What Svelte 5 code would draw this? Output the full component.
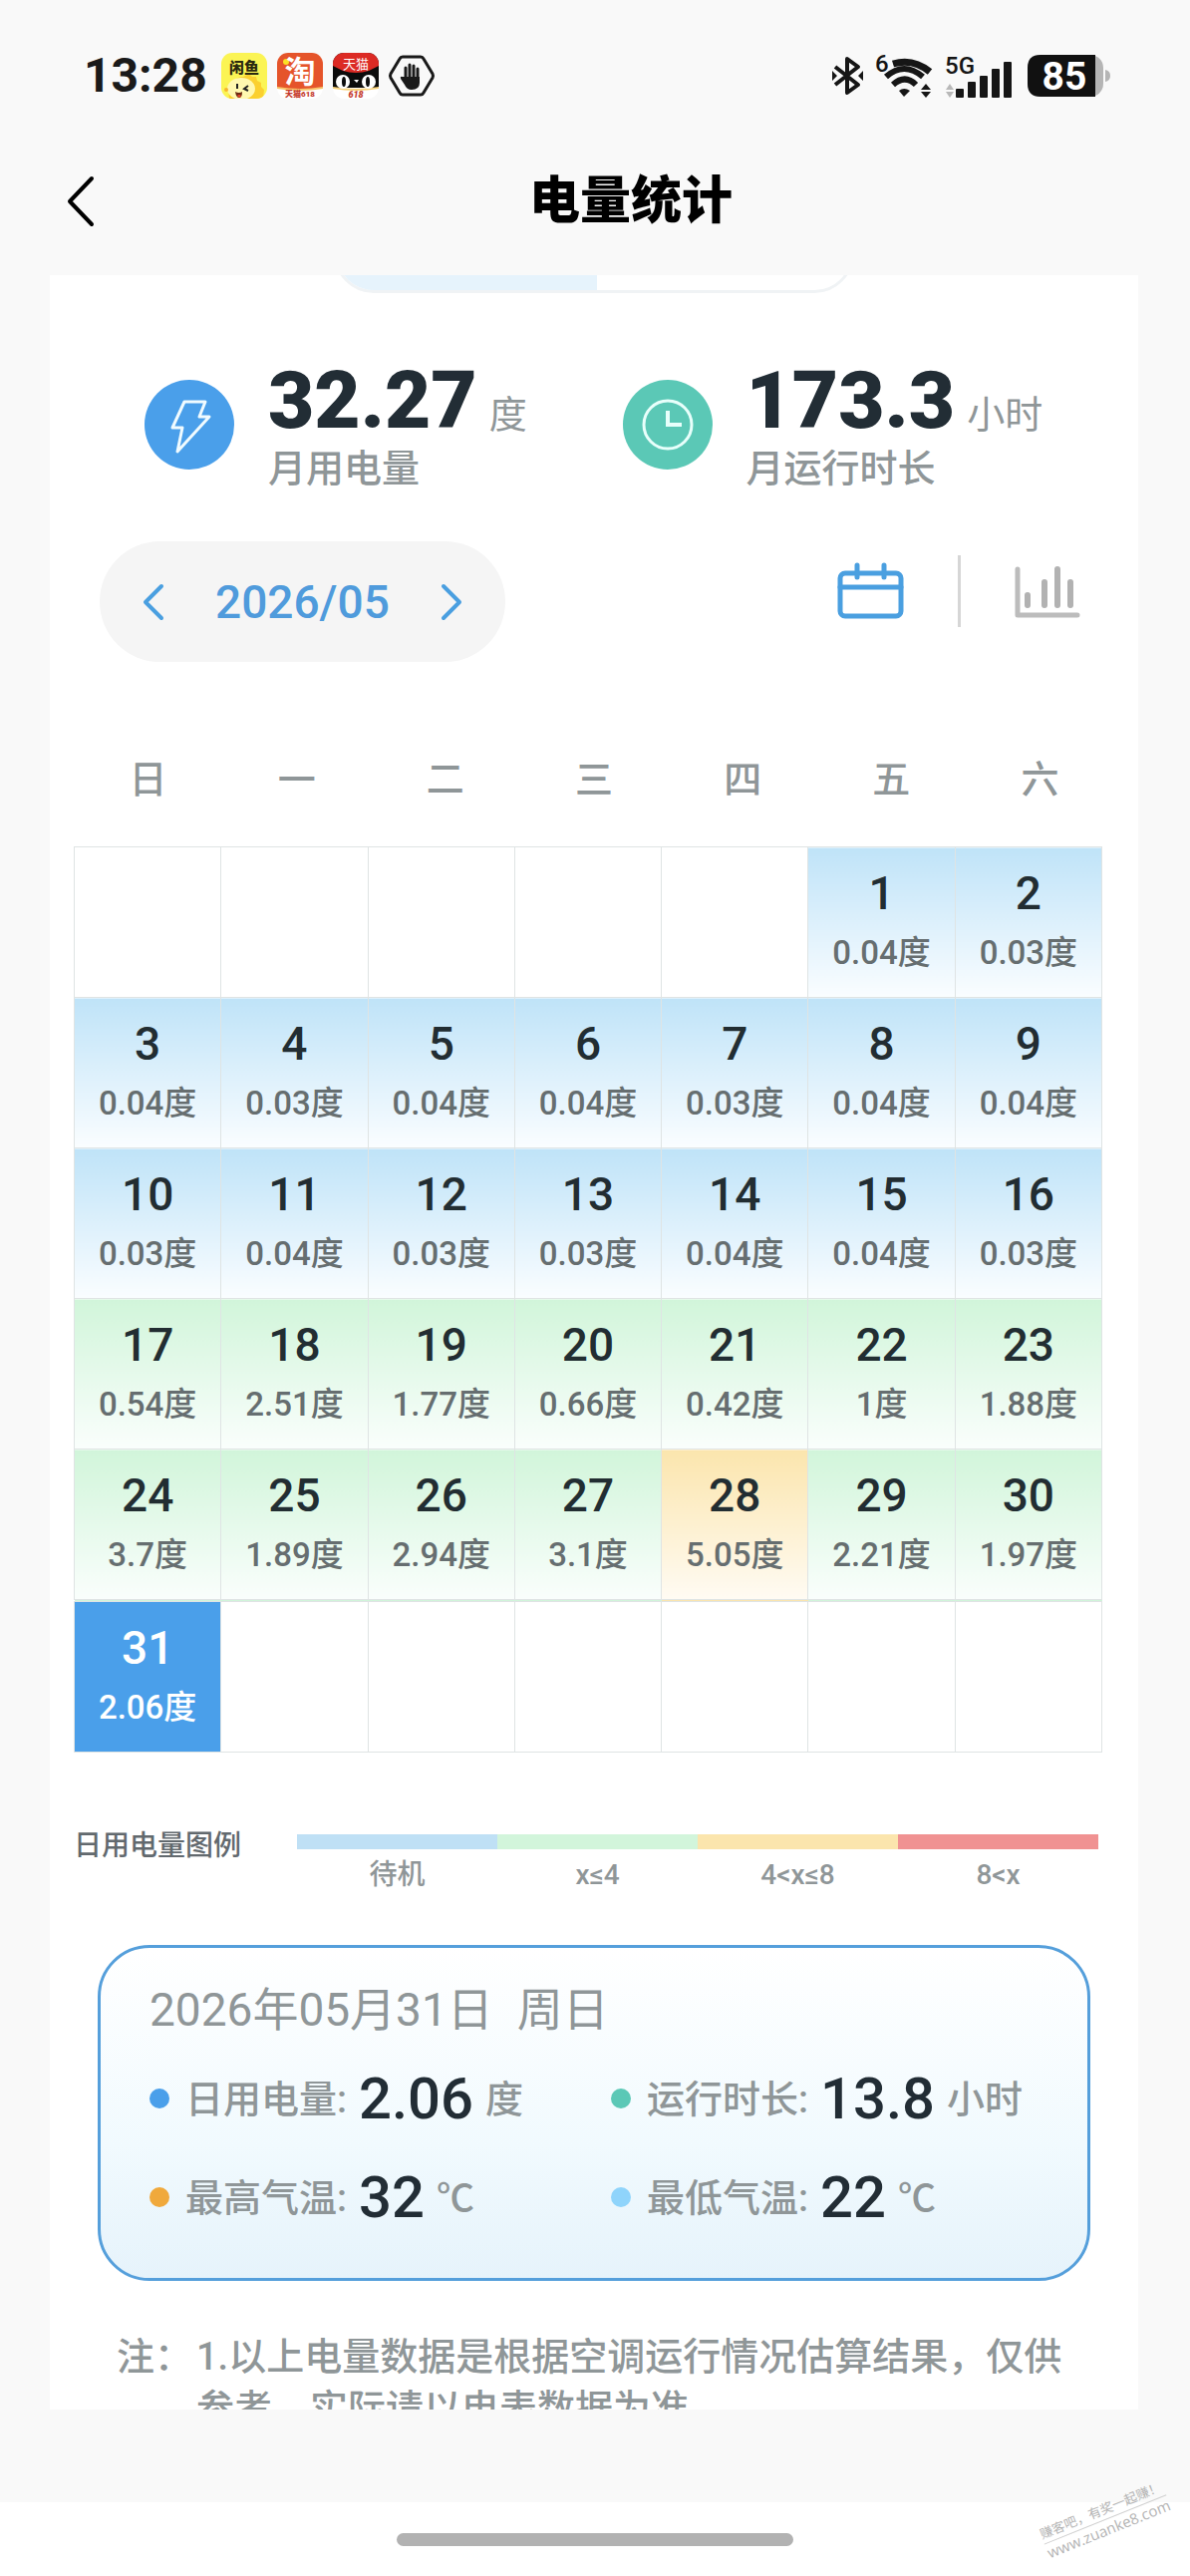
<script lang="ts">
  const weekdays = ['日', '一', '二', '三', '四', '五', '六']

  // 2026年5月，1号是周五
  const firstWeekday = 5
  const usage = [
    0.04, 0.03, 0.04, 0.03, 0.04, 0.04, 0.03, 0.04, 0.04, 0.03, 0.04,
    0.03, 0.03, 0.04, 0.04, 0.03, 0.54, 2.51, 1.77, 0.66, 0.42, 1,
    1.88, 3.7, 1.89, 2.94, 3.1, 5.05, 2.21, 1.97, 2.06
  ]
  const standbyLimit = 0.1
  let selectedDay = 31

  const legend = [
    { level: 'standby', label: '待机' },
    { level: 'low', label: 'x≤4' },
    { level: 'mid', label: '4<x≤8' },
    { level: 'high', label: '8<x' }
  ]

  const details = [
    { color: 'blue', label: '日用电量:', value: '2.06', unit: '度' },
    { color: 'green', label: '运行时长:', value: '13.8', unit: '小时' },
    { color: 'orange', label: '最高气温:', value: '32', unit: '℃' },
    { color: 'sky', label: '最低气温:', value: '22', unit: '℃' }
  ]

  function getLevel(value: number) {
    if (value < standbyLimit) return 'standby'
    if (value <= 4) return 'low'
    if (value <= 8) return 'mid'
    return 'high'
  }

  function buildWeeks() {
    const cells: any[] = Array(firstWeekday).fill(null)
    usage.forEach((value, i) => cells.push({ day: i + 1, value, level: getLevel(value) }))
    while (cells.length % 7) cells.push(null)

    const weeks = []
    for (let i = 0; i < cells.length; i += 7) weeks.push(cells.slice(i, i + 7))
    return weeks
  }

  const weeks = buildWeeks()
</script>

<div class="page" lang="zh-CN">
  <div class="status-bar">
    <div class="status-left">
      <span class="time">13:28</span>
      <svg width="46" height="46" viewBox="0 0 46 46">
        <clipPath id="fish"><rect width="46" height="46" rx="11" /></clipPath>
        <g clip-path="url(#fish)">
          <rect width="46" height="46" fill="#fbf454" />
          <path d="M8 46C6 34 12 24 22 24l6-3 3 3 4 0 1 4 4 2 0 4 3 3-1 9z" fill="#fbd02f" />
          <ellipse cx="20" cy="36" rx="14" ry="11" fill="#fff8b0" />
          <circle cx="5" cy="37" r="2" fill="#f7b52c" />
          <path d="M16 31v5M27 33l-4 3 4 2" fill="none" stroke="#222" stroke-width="2" />
          <path d="M14 39q4 2 7 0q0 6-3 6t-4-6z" fill="#6b2a12" />
          <path d="M16 43q2-2 4 0q-2 3-4 0z" fill="#e8452c" />
        </g>
        <text x="23" y="20" text-anchor="middle" font-size="15" font-weight="900" fill="#2b2a10">闲鱼</text>
      </svg>
      <svg width="46" height="46" viewBox="0 0 46 46">
        <clipPath id="tao"><rect width="46" height="46" rx="11" /></clipPath>
        <g clip-path="url(#tao)">
          <rect width="46" height="46" fill="#fff" />
          <path d="M0 0h46v35q-23 4-46 0z" fill="#e5542a" />
          <path d="M0 34q23 4 46 0v2q-23 4-46 0z" fill="#f8c56a" />
        </g>
        <circle cx="9" cy="9" r="3" fill="#fbe024" />
        <text x="23" y="30" text-anchor="middle" font-size="31" font-weight="700" fill="#fff">淘</text>
        <text x="23" y="44" text-anchor="middle" font-size="8" font-weight="900" fill="#c43a2c">天猫618</text>
      </svg>
      <svg width="46" height="46" viewBox="0 0 46 46">
        <clipPath id="tmall"><rect width="46" height="46" rx="11" /></clipPath>
        <g clip-path="url(#tmall)">
          <rect width="46" height="46" fill="#fff" />
          <path d="M0 0h46v35H0z" fill="#0c0c0c" />
          <path d="M0 0h46v13l-10 5q-13 4-26 0L0 13z" fill="#dc2a24" />
          <path d="M0 34q23 4 46 0v2q-23 4-46 0z" fill="#f8d27a" />
        </g>
        <ellipse cx="10" cy="29" rx="7" ry="7" fill="#fff" />
        <ellipse cx="36" cy="29" rx="7" ry="7" fill="#fff" />
        <ellipse cx="11" cy="29" rx="2" ry="5" fill="#0c0c0c" />
        <ellipse cx="35" cy="29" rx="2" ry="5" fill="#0c0c0c" />
        <path d="M21 27h5l-2 3z" fill="#fff" />
        <text x="23" y="16" text-anchor="middle" font-size="13" fill="#fff">天猫</text>
        <text x="23" y="45" text-anchor="middle" font-size="9" font-weight="900" font-style="italic" fill="#c43a2c">618</text>
      </svg>
      <svg width="46" height="46" viewBox="0 0 46 46">
        <path d="M14 4h18q2 0 3 2l9 15q1 2 0 4l-9 15q-1 2-3 2H14q-2 0-3-2L2 25q-1-2 0-4l9-15q1-2 3-2z" fill="none" stroke="#1a1a1a" stroke-width="3" />
        <path d="M17 28V15M21 27V12M25 27V13M29 28V16" stroke="#1a1a1a" stroke-width="3" stroke-linecap="round" />
        <path d="M15 24h16v6q0 7-8 7-5 0-7-5l-4-6q-1-3 2-2z" fill="#1a1a1a" />
      </svg>
    </div>
    <div class="status-right">
      <svg width="31" height="40" viewBox="0 0 31 40">
        <path d="M3 11l23 18-11 8V3l11 8L3 29" fill="none" stroke="#161616" stroke-width="4" stroke-linejoin="round" />
        <path d="M0 15l5 5-5 5zM31 15l-5 5 5 5z" fill="#161616" />
      </svg>
      <svg width="58" height="46" viewBox="0 0 58 46">
        <text class="net" x="0" y="19" font-size="24">6</text>
        <path d="M18 11q20-6 37 8" fill="none" stroke="#161616" stroke-width="7" />
        <path d="M11 24q18-16 37 0" fill="none" stroke="#161616" stroke-width="6" />
        <path d="M18 32q12-11 23 0" fill="none" stroke="#161616" stroke-width="6" />
        <path d="M24 38q5-4 11 0l-6 6z" fill="#161616" />
        <path d="M46 37l5-6 5 6zM46 39l5 6 5-6z" fill="#161616" />
      </svg>
      <svg width="70" height="46" viewBox="0 0 70 46">
        <text class="net" x="0" y="21" font-size="24">5G</text>
        <path d="M1 37l4-6 4 6zM1 39l4 6 4-6z" fill="#b8b8b8" />
        <rect x="11" y="36" width="8" height="9" rx="1" />
        <rect x="23" y="29" width="8" height="16" rx="1" />
        <rect x="35" y="23" width="8" height="22" rx="1" />
        <rect x="47" y="16" width="8" height="29" rx="1" />
        <rect x="59" y="9" width="8" height="36" rx="1" />
      </svg>
      <svg width="84" height="42" viewBox="0 0 84 42">
        <rect x="1" width="76" height="42" rx="13" fill="#b5b5b5" />
        <path d="M14 0h55v42H14Q1 42 1 29V13Q1 0 14 0z" fill="#111" />
        <path d="M79 15q5 1 5 6t-5 6z" fill="#b5b5b5" />
        <text x="38" y="35" text-anchor="middle" font-size="39" font-weight="700" fill="#fff">85</text>
      </svg>
    </div>
  </div>

  <header class="nav-bar">
    <button class="back" aria-label="返回">
      <svg width="42" height="60" viewBox="0 0 42 60">
        <path d="M32 7L10 30l22 23" fill="none" stroke="#000" stroke-width="4" stroke-linecap="round" stroke-linejoin="round" />
      </svg>
    </button>
    <h1>电量统计</h1>
  </header>

  <main class="panel">
    <div class="segment">
      <button class="active" aria-label="月"></button>
      <button aria-label="年"></button>
    </div>

    <section class="stats">
      <div class="stat">
        <svg width="90" height="90" viewBox="0 0 90 90">
          <circle cx="45" cy="45" r="45" fill="#4a9fea" />
          <path d="M40 22h21l-6 15h10L33 72l5-24H28z" fill="none" stroke="#f0fbff" stroke-width="3" stroke-linejoin="round" />
        </svg>
        <div>
          <div class="total"><strong>32.27</strong><span>度</span></div>
          <div class="caption">月用电量</div>
        </div>
      </div>
      <div class="stat">
        <svg width="90" height="90" viewBox="0 0 90 90">
          <circle cx="45" cy="45" r="45" fill="#5bc8b6" />
          <circle cx="45" cy="45" r="24" fill="none" stroke="#e8fffb" stroke-width="3" />
          <path d="M45 31v14h14" fill="none" stroke="#e8fffb" stroke-width="4" />
        </svg>
        <div>
          <div class="total"><strong>173.3</strong><span>小时</span></div>
          <div class="caption">月运行时长</div>
        </div>
      </div>
    </section>

    <div class="toolbar">
      <div class="month">
        <button aria-label="上个月">
          <svg width="20" height="36" viewBox="0 0 20 36">
            <path d="M18 2L2 18l16 16" fill="none" stroke="#4a9fe0" stroke-width="4" stroke-linecap="round" stroke-linejoin="round" />
          </svg>
        </button>
        <span>2026/05</span>
        <button aria-label="下个月">
          <svg width="20" height="36" viewBox="0 0 20 36">
            <path d="M2 2l16 16L2 34" fill="none" stroke="#4a9fe0" stroke-width="4" stroke-linecap="round" stroke-linejoin="round" />
          </svg>
        </button>
      </div>
      <div class="views">
        <button aria-label="日历">
          <svg width="67" height="56" viewBox="0 0 67 56">
            <rect x="3" y="10" width="61" height="43" rx="5" fill="none" stroke="#4a9fe0" stroke-width="5" />
            <path d="M3 24h61M20 2v12M47 2v12" fill="none" stroke="#4a9fe0" stroke-width="5" stroke-linecap="round" />
          </svg>
        </button>
        <i></i>
        <button aria-label="图表">
          <svg width="66" height="56" viewBox="0 0 66 56">
            <path d="M3 6v46h60" fill="none" stroke="#bcbcbc" stroke-width="5" stroke-linecap="round" stroke-linejoin="round" />
            <path d="M13 32v10M30 19v23M43 6v36M56 19v23" stroke="#b2b2b2" stroke-width="6" stroke-linecap="round" />
          </svg>
        </button>
      </div>
    </div>

    <div class="weekdays">
      {#each weekdays as name}
        <span>{name}</span>
      {/each}
    </div>

    <table>
      <tbody>
        {#each weeks as week}
          <tr>
            {#each week as cell}
              {#if cell}
                <td class={cell.level} class:selected={cell.day === selectedDay} on:click={() => (selectedDay = cell.day)}>
                  <div class="day">{cell.day}</div>
                  <div class="used">{cell.value}度</div>
                </td>
              {:else}
                <td></td>
              {/if}
            {/each}
          </tr>
        {/each}
      </tbody>
    </table>

    <div class="legend">
      <span class="legend-title">日用电量图例</span>
      <div class="scale">
        {#each legend as item}
          <div class="step">
            <div class="bar {item.level}"></div>
            <span>{item.label}</span>
          </div>
        {/each}
      </div>
    </div>

    <section class="detail">
      <h2><span>2026年05月31日</span><span>周日</span></h2>
      <div class="items">
        {#each details as item}
          <div class="item">
            <i class={item.color}></i>
            <span class="name">{item.label}</span>
            <b>{item.value}</b>
            <span>{item.unit}</span>
          </div>
        {/each}
      </div>
    </section>

    <div class="note">
      <span>注：</span>
      <p>1.以上电量数据是根据空调运行情况估算结果，仅供参考，实际请以电表数据为准。</p>
    </div>
  </main>

  <div class="home"><i></i></div>

  <div class="watermark">
    <span>赚客吧，有奖一起赚！</span>
    <span class="site">www.zuanke8.com</span>
  </div>
</div>

<style>
  :global(body) {
    background: #f9f9f9;
  }

  .page {
    position: relative;
    display: flex;
    flex-direction: column;
    height: 100vh;
    overflow: hidden;
    background: #f9f9f9;
    color: #8f9698;
    font-family: Roboto, 'Noto Sans CJK SC', sans-serif;
    font-size: 38px;
  }

  button {
    display: block;
    padding: 0;
    border: none;
    background: none;
    cursor: pointer;
  }

  svg {
    display: block;
    flex: none;
    overflow: visible;
  }

  .status-bar {
    display: flex;
    flex: none;
    justify-content: space-between;
    align-items: center;
    height: 152px;
    padding: 0 80px 0 84px;
  }

  .status-left,
  .status-right {
    display: flex;
    align-items: center;
    gap: 10px;
  }

  .status-right {
    gap: 12px;
    fill: #161616;
  }

  .net {
    font-weight: 500;
  }

  .time {
    margin-right: 4px;
    color: #1a1a1a;
    font-size: 48px;
    font-weight: 700;
    line-height: 60px;
  }

  .nav-bar {
    display: flex;
    flex: none;
    align-items: center;
    height: 100px;
    margin-bottom: 24px;
    padding: 0 30px 0 60px;
  }

  h1 {
    flex: 1;
    margin: 0;
    color: #000;
    font-size: 51px;
    font-weight: 900;
    line-height: 60px;
    text-align: center;
  }

  .panel {
    flex: 1;
    min-height: 0;
    margin: 0 52px 0 50px;
    overflow-y: auto;
    scrollbar-width: none;
    background: #fff;
  }

  .segment {
    display: flex;
    box-sizing: border-box;
    width: 522px;
    height: 80px;
    margin: -62px auto 0;
    border: 3px solid #f0f3f5;
    border-radius: 40px;
    overflow: hidden;
  }

  .segment button {
    flex: 1;
  }

  .segment .active {
    background: #e6f3fc;
    box-shadow: 0 0 0 3px #e6f3fc;
  }

  .stats {
    display: grid;
    grid-template-columns: 1fr 1fr;
    margin-top: 64px;
    padding: 0 38px 0 95px;
  }

  .stat {
    display: flex;
    align-items: center;
    gap: 34px;
  }

  .total {
    display: flex;
    align-items: baseline;
    gap: 12px;
    height: 88px;
    white-space: nowrap;
  }

  .total strong {
    color: #222d35;
    font-size: 80px;
    font-weight: 900;
    line-height: 88px;
  }

  .total span {
    line-height: 48px;
  }

  .caption {
    font-weight: 500;
    line-height: 48px;
  }

  .toolbar {
    display: flex;
    justify-content: space-between;
    align-items: flex-start;
    margin-top: 49px;
    padding: 0 58px 0 50px;
  }

  .month {
    display: flex;
    align-items: center;
    gap: 52px;
    height: 121px;
    padding: 0 44px;
    border-radius: 61px;
    background: #f5f5f5;
    color: #4f9bdc;
    font-size: 46px;
    font-weight: 500;
  }

  .views {
    display: flex;
    align-items: center;
    gap: 54px;
    height: 100px;
  }

  .views i {
    width: 3px;
    height: 72px;
    background: #d6d6d6;
  }

  .weekdays {
    display: grid;
    grid-template-columns: repeat(7, 1fr);
    margin: 94px 24px 43px;
    font-weight: 500;
    line-height: 48px;
    text-align: center;
  }

  table {
    width: calc(100% - 60px);
    margin-left: 24px;
    border-collapse: collapse;
    table-layout: fixed;
  }

  td {
    box-sizing: border-box;
    height: 151px;
    padding: 16px 0 14px;
    border: 1px solid #dfe4e4;
    text-align: center;
    vertical-align: top;
  }

  tr:last-child td {
    border-top: 3px double #dfe4e4;
  }

  td.standby {
    background: linear-gradient(#bfe3f8, #fafdff);
  }

  td.low {
    background: linear-gradient(#d1f5da, #fafefc);
  }

  td.mid {
    background: linear-gradient(#fbe5ad, #fffbf3);
  }

  td.high {
    background: linear-gradient(#f09292, #fff5f5);
  }

  .day {
    color: #222d32;
    font-size: 46px;
    font-weight: 500;
    line-height: 60px;
  }

  .used {
    color: #666e70;
    font-size: 33px;
    font-weight: 500;
    line-height: 60px;
  }

  td.selected {
    background: #4a9fea;
  }

  .selected .day,
  .selected .used {
    color: #fff;
  }

  .legend {
    display: flex;
    gap: 56px;
    margin: 76px 40px 0 24px;
    font-size: 28px;
    font-weight: 500;
    line-height: 36px;
  }

  .legend-title {
    color: #62696e;
  }

  .scale {
    display: flex;
    flex: 1;
    padding-top: 6px;
  }

  .step {
    flex: 1;
    text-align: center;
  }

  .bar {
    height: 15px;
    margin-bottom: 8px;
  }

  .bar.standby {
    background: #bfe0f5;
  }

  .bar.low {
    background: #d2f5db;
  }

  .bar.mid {
    background: #fbe5ad;
  }

  .bar.high {
    background: #f09292;
  }

  .detail {
    margin: 52px 48px 0;
    padding: 32px 15px 32px 49px;
    border: 3px solid #559fdb;
    border-radius: 52px;
    background: linear-gradient(#fff, #f1fafe 60%, #e6f3fb);
  }

  h2 {
    display: flex;
    gap: 24px;
    margin: 0 0 9px;
    font-size: 46px;
    font-weight: 400;
    line-height: 60px;
  }

  .items {
    display: grid;
    grid-template-columns: 1fr 1fr;
    grid-auto-rows: 99px;
  }

  .item {
    display: flex;
    align-items: center;
    gap: 12px;
    white-space: nowrap;
  }

  .item i {
    width: 20px;
    height: 20px;
    margin-right: 4px;
    border-radius: 50%;
  }

  .item b {
    color: #222d35;
    font-size: 58px;
    font-weight: 500;
  }

  .item span {
    padding-bottom: 4px;
    font-weight: 500;
  }

  .blue {
    background: #4a9fea;
  }

  .green {
    background: #5bc8b6;
  }

  .orange {
    background: #f0a93c;
  }

  .sky {
    background: #8fd4fb;
  }

  .note {
    display: flex;
    gap: 4px;
    margin-top: 50px;
    padding: 0 67px;
    font-weight: 500;
    line-height: 52px;
  }

  .note span {
    flex: none;
  }

  .note p {
    margin: 0;
  }

  .home {
    display: flex;
    flex: none;
    justify-content: center;
    align-items: center;
    height: 74px;
    margin-top: 93px;
    background: #fff;
  }

  .home i {
    width: 398px;
    height: 13px;
    border-radius: 7px;
    background: #b2b2b2;
  }

  .watermark {
    position: absolute;
    right: 20px;
    bottom: 38px;
    display: flex;
    flex-direction: column;
    color: #b4b4b4;
    font-size: 13px;
    line-height: 18px;
    white-space: nowrap;
    transform: rotate(-22deg);
  }

  .site {
    border-top: 1px solid #d0d0d0;
    font-family: 'Open Sans', sans-serif;
    font-size: 15px;
  }
</style>
